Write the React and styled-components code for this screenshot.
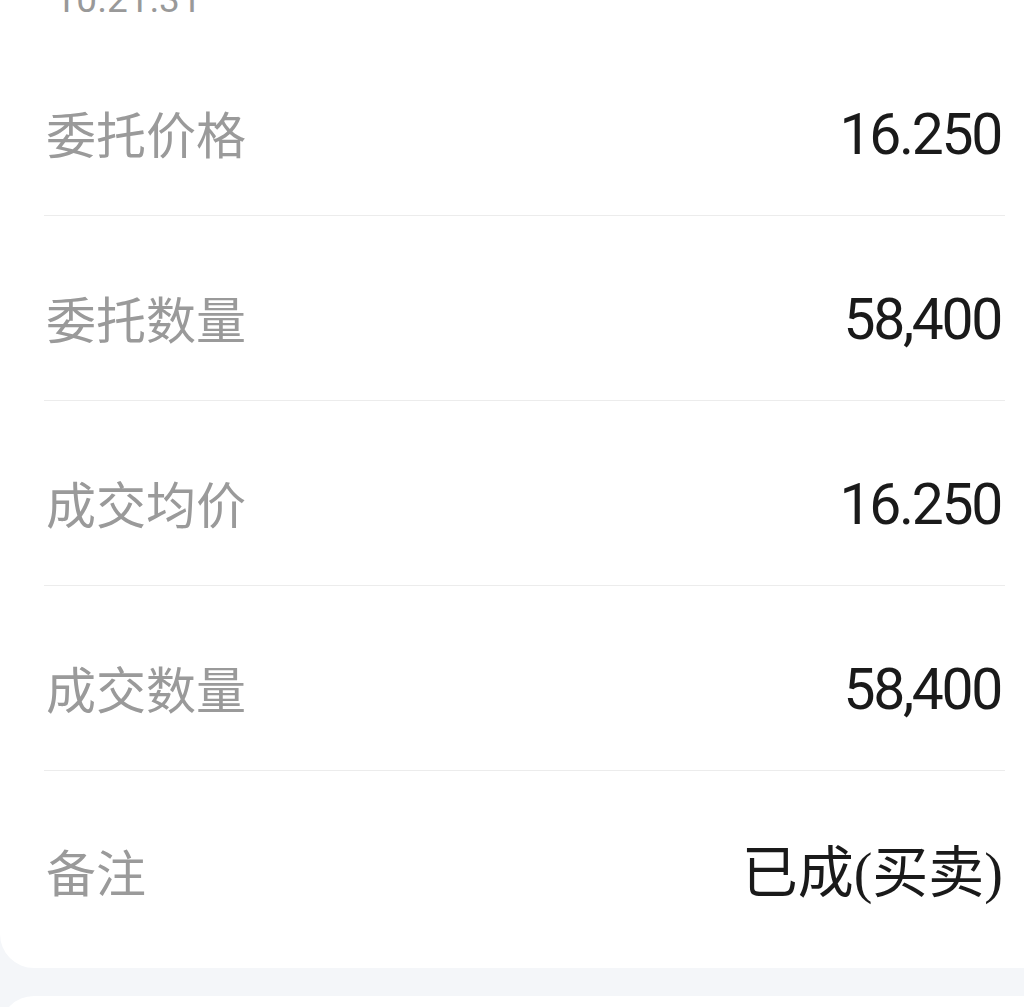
import styled, { createGlobalStyle } from "styled-components";

const GlobalStyle = createGlobalStyle`
  html, body {
    margin: 0;
    padding: 0;
    background: #f4f6f9;
    overflow: hidden;
  }
  body {
    font-family: Roboto, "Noto Sans CJK SC", sans-serif;
  }
`;

const Page = styled.div`
  width: 1024px;
  height: 1007px;
  overflow: hidden;
  background: #f4f6f9;
`;

const Card = styled.section`
  background: #fff;
  margin-right: -48px;
  border-radius: ${({ top }) => (top ? "34px 34px 0 0" : "0 0 34px 34px")};
  padding-bottom: ${({ top }) => (top ? "0" : "13px")};
  height: ${({ top }) => (top ? "60px" : "auto")};
  margin-top: ${({ top }) => (top ? "28px" : "0")};
`;

const Time = styled.div`
  height: 31px;
  overflow: hidden;
  padding-left: 55px;
  font-family: Roboto, sans-serif;
  font-size: 37px;
  line-height: 1;
  color: #999;
  letter-spacing: 0.5px;
  span {
    display: block;
    margin-top: -19px;
  }
`;

const List = styled.div`
  margin: 0 67px 0 44px;
`;

const Row = styled.div`
  display: flex;
  align-items: center;
  justify-content: space-between;
  height: 60px;
  padding: ${({ last }) => (last ? "69px 2px 55px" : "71px 2px 53px")};
  border-bottom: ${({ last }) => (last ? "none" : "1px solid #ececec")};
`;

const Label = styled.span`
  font-family: "Noto Sans CJK SC", sans-serif;
  font-size: 50px;
  color: #9a9a9a;
  line-height: 60px;
`;

const Value = styled.span`
  font-family: ${({ cjk }) =>
    cjk ? '"Noto Sans CJK SC", sans-serif' : "Roboto, sans-serif"};
  font-size: ${({ cjk }) => (cjk ? "56px" : "57px")};
  letter-spacing: ${({ cjk }) => (cjk ? "0" : "-2.3px")};
  color: #1a1a1a;
  line-height: 60px;
  padding-top: ${({ cjk }) => (cjk ? "0" : "5px")};
  margin-right: ${({ cjk }) => (cjk ? "0" : "2px")};
`;

const Paren = styled.span`
  font-family: "Liberation Serif", serif;
`;

const rows = [
  { label: "委托价格", value: "16.250" },
  { label: "委托数量", value: "58,400" },
  { label: "成交均价", value: "16.250" },
  { label: "成交数量", value: "58,400" },
];

export default function App() {
  return (
    <Page>
      <GlobalStyle />
      <Card>
        <Time>
          <span>10:21:31</span>
        </Time>
        <List>
          {rows.map((r) => (
            <Row key={r.label}>
              <Label>{r.label}</Label>
              <Value>{r.value}</Value>
            </Row>
          ))}
          <Row last>
            <Label>备注</Label>
            <Value cjk>
              已成<Paren>(</Paren>买卖<Paren>)</Paren>
            </Value>
          </Row>
        </List>
      </Card>
      <Card top />
    </Page>
  );
}
